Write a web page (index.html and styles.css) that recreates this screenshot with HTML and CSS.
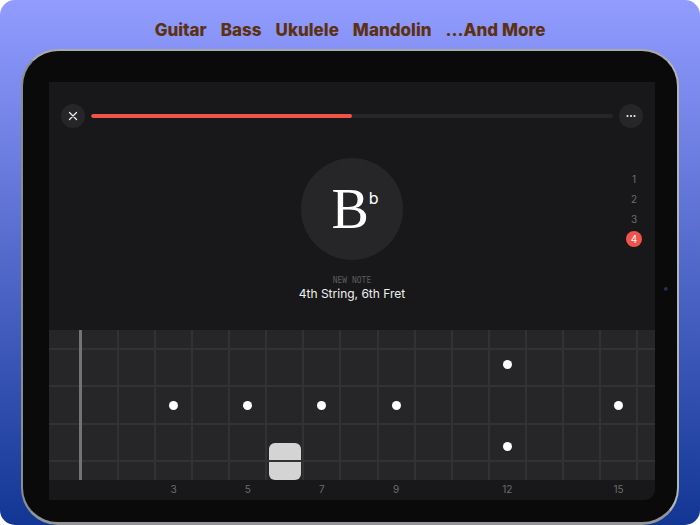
FILE: index.html
```html
<!DOCTYPE html>
<html lang="en">
<head>
    <meta charset="UTF-8">
    <meta name="viewport" content="width=device-width, initial-scale=1.0">
    <title>Fretboard Notes</title>
    <link rel="stylesheet" href="styles.css">
</head>
<body>

    <div class="promo">
        <ul class="instruments">
            <li>Guitar</li>
            <li>Bass</li>
            <li>Ukulele</li>
            <li>Mandolin</li>
            <li>...And More</li>
        </ul>

        <div class="tablet">
            <span class="camera"></span>
            <main class="screen">
                <div class="topbar">
                    <button class="round-btn" aria-label="Close">
                        <svg viewBox="0 0 24 24"><path d="M8.5 8.5l7 7M15.5 8.5l-7 7" stroke="currentColor" stroke-width="1.3" stroke-linecap="round"/></svg>
                    </button>
                    <progress class="progress" value="50" max="100" aria-label="Lesson progress"></progress>
                    <button class="round-btn" aria-label="More options">
                        <svg viewBox="0 0 24 24" fill="currentColor"><circle cx="8.5" cy="12" r="1.1"/><circle cx="12" cy="12" r="1.1"/><circle cx="15.5" cy="12" r="1.1"/></svg>
                    </button>
                </div>

                <div class="lesson">
                    <div class="note">
                        <div class="note-circle">
                            <span class="note-name">B<sup>b</sup></span>
                        </div>
                        <p class="note-label">NEW NOTE</p>
                        <p class="note-place">4th String, 6th Fret</p>
                    </div>
                    <div class="string-picker">
                        <button>1</button>
                        <button>2</button>
                        <button>3</button>
                        <button class="active">4</button>
                    </div>
                </div>

                <div class="fretboard">
                    <div class="open"></div>
                    <div class="fret"></div>
                    <div class="fret"></div>
                    <div class="fret"><i class="dot"></i></div>
                    <div class="fret"></div>
                    <div class="fret"><i class="dot"></i></div>
                    <div class="fret played"><i class="finger"></i></div>
                    <div class="fret"><i class="dot"></i></div>
                    <div class="fret"></div>
                    <div class="fret"><i class="dot"></i></div>
                    <div class="fret"></div>
                    <div class="fret"></div>
                    <div class="fret double"><i class="dot"></i><i class="dot"></i></div>
                    <div class="fret"></div>
                    <div class="fret"></div>
                    <div class="fret"><i class="dot"></i></div>
                    <div class="strings"><i></i><i></i><i></i><i></i></div>
                </div>

                <div class="fret-numbers">
                    <span></span>
                    <span></span>
                    <span></span>
                    <span>3</span>
                    <span></span>
                    <span>5</span>
                    <span></span>
                    <span>7</span>
                    <span></span>
                    <span>9</span>
                    <span></span>
                    <span></span>
                    <span>12</span>
                    <span></span>
                    <span></span>
                    <span>15</span>
                </div>
            </main>
        </div>
    </div>

</body>
</html>
```
FILE: styles.css
```css
* {
    margin: 0;
    padding: 0;
    box-sizing: border-box;
}

body {
    background: #fff;
    font-family: Inter, 'Liberation Sans', sans-serif;
}

button {
    border: none;
    font-family: inherit;
    cursor: pointer;
}

.promo {
    display: flex;
    flex-direction: column;
    min-height: 100vh;
    padding: 19px 21px 0;
    border-radius: 15px;
    background: linear-gradient(#929cff, #123694);
}

.instruments {
    display: flex;
    justify-content: center;
    gap: 14px;
    margin-bottom: 8px;
    list-style: none;
    color: #5c3110;
    font-size: 17px;
    font-weight: 800;
    line-height: 22px;
}

.tablet {
    position: relative;
    display: flex;
    flex: 1;
    padding: 31px 22px 22px 26px;
    border: 2px solid;
    border-bottom-width: 3px;
    border-color: #a9abaa #b4b6b7 #929498 #8b8e8f;
    border-radius: 37px;
    background: #0a0a0a;
}

.camera {
    position: absolute;
    top: 50%;
    right: 9px;
    width: 4px;
    height: 4px;
    border-radius: 50%;
    background: radial-gradient(circle at 30% 40%, #24406c, #10131f);
}

.screen {
    flex: 1;
    display: flex;
    flex-direction: column;
    overflow: hidden;
    border-radius: 1px 1px 10px 1px;
    background: #18181a;
}

.topbar {
    display: flex;
    align-items: center;
    gap: 6px;
    padding: 22px 12px 0;
}

.round-btn {
    width: 24px;
    height: 24px;
    border-radius: 50%;
    background: #262628;
    color: #eee;
}

.round-btn svg {
    display: block;
    width: 100%;
}

.progress {
    flex: 1;
    min-width: 0;
    height: 4px;
    border: none;
    border-radius: 2px;
    overflow: hidden;
    appearance: none;
    background: #262628;
}

.progress::-webkit-progress-bar {
    background: #262628;
}

.progress::-webkit-progress-value {
    border-radius: 2px;
    background: #f1534a;
}

.lesson {
    flex: 1;
    display: grid;
    grid-template-columns: 1fr auto 1fr;
    padding: 30px 13px 0;
}

.note {
    grid-column: 2;
    display: flex;
    flex-direction: column;
    align-items: center;
}

.note-circle {
    display: flex;
    justify-content: center;
    align-items: center;
    width: 102px;
    height: 102px;
    margin-bottom: 16px;
    border-radius: 50%;
    background: #262628;
}

.note-name {
    display: flex;
    padding-left: 6px;
    color: #fff;
    font-family: 'Liberation Serif', serif;
    font-size: 56px;
    line-height: 64px;
}

.note-name sup {
    font-family: Inter, sans-serif;
    font-size: 16px;
    line-height: 42px;
}

.note-label {
    color: #5c5c5e;
    font-family: 'DejaVu Sans Mono', monospace;
    font-size: 8px;
    line-height: 10px;
}

.note-place {
    color: #f0f0f0;
    font-size: 12px;
    line-height: 15px;
}

.string-picker {
    display: flex;
    flex-direction: column;
    align-items: flex-end;
    gap: 4px;
    padding-top: 13px;
}

.string-picker button {
    width: 16px;
    height: 16px;
    border-radius: 50%;
    background: none;
    color: #6c6c6e;
    font-size: 10px;
    line-height: 16px;
}

.string-picker .active {
    background: #f1534a;
    color: #fff;
}

.fretboard,
.fret-numbers {
    display: grid;
    grid-template-columns: 33px repeat(15, 2fr);
    padding-right: 17px;
}

.fretboard {
    position: relative;
    height: 150px;
    background: #262628;
}

.open {
    border-right: 3px solid #737375;
    z-index: 1;
}

.fret {
    display: flex;
    flex-direction: column;
    justify-content: center;
    align-items: center;
    border-right: 2px solid #323234;
}

.fret.double {
    justify-content: space-between;
    padding: 30px 0 29px;
}

.fret.played {
    justify-content: flex-end;
}

.dot {
    width: 9px;
    height: 9px;
    border-radius: 50%;
    background: #fff;
    z-index: 1;
}

.finger {
    width: 32px;
    height: 25%;
    border-radius: 6px;
    background: #d4d4d4;
}

/* strings run across the whole board, over the frets */
.strings {
    position: absolute;
    inset: 0;
    display: flex;
    flex-direction: column;
}

.strings i {
    flex: 1;
    display: flex;
    align-items: center;
}

.strings i::before {
    content: "";
    flex: 1;
    height: 2px;
    background: #323234;
}

.fret-numbers {
    height: 20px;
    color: #6c6c6e;
    font-size: 10px;
    line-height: 18px;
    text-align: center;
}

.fret-numbers span {
    padding-right: 2px;
}
```
